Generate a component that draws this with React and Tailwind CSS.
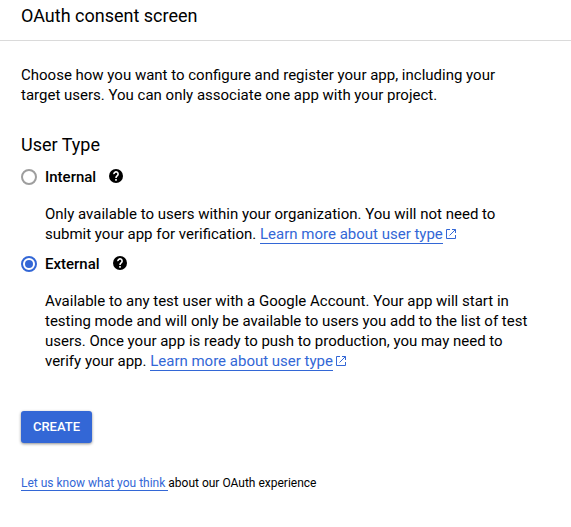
function HelpIcon() {
  return (
    <svg viewBox="0 0 14 14" className="ml-[13px] size-3.5 -translate-y-px" fill="none">
      <circle cx="7" cy="7" r="7" fill="#000" />
      <path
        d="M4.9 5.1a2.1 2.1 0 1 1 3.6 1.4C7.7 7.3 7 7.5 7 9"
        stroke="#fff"
        strokeWidth="1.6"
      />
      <path d="M6.2 10h1.6v1.7H6.2z" fill="#fff" />
    </svg>
  );
}

function Radio({ checked }) {
  return (
    <span
      className={
        "flex size-4 shrink-0 items-center justify-center rounded-full border-2 " +
        (checked ? "border-[#3367d6]" : "border-[#9e9e9e]")
      }
    >
      {checked && <span className="size-2 rounded-full bg-[#3367d6]" />}
    </span>
  );
}

function Option({ label, checked, children }) {
  return (
    <div>
      <div className="flex h-5 items-center">
        <Radio checked={checked} />
        <span className="ml-2 text-[15px] font-medium leading-5">{label}</span>
        <HelpIcon />
      </div>
      <p className="mt-[17px] pl-6">{children}</p>
    </div>
  );
}

function LearnMore() {
  return (
    <a className="text-[#3367d6]">
      <span className="border-b border-[#3367d6]">Learn more about user type</span>
      <svg viewBox="0 0 10 10" className="ml-[3px] inline-block size-2.5 align-baseline" fill="none" stroke="currentColor">
        <path d="M4 .5H.5v9h9V6M6 .5h3.5V4M9.5.5 3.5 6.5" />
      </svg>
    </a>
  );
}

export default function App() {
  return (
    <div className="h-[527px] w-[571px] overflow-hidden bg-white font-[Roboto,sans-serif] text-[15px] leading-5 text-black">
      <header className="h-[41px] border-b border-[#dadada] pl-[21px] pt-1 text-lg leading-6">
        OAuth consent screen
      </header>
      <main className="whitespace-nowrap pl-[21px] pt-6">
        <p>
          Choose how you want to configure and register your app, including your
          <br />
          target users. You can only associate one app with your project.
        </p>
        <h2 className="mt-7 text-lg leading-6">User Type</h2>
        <div className="mt-2.5 flex flex-col gap-2.5">
          <Option label="Internal">
            Only available to users within your organization. You will not need to
            <br />
            submit your app for verification. <LearnMore />
          </Option>
          <Option label="External" checked>
            Available to any test user with a Google Account. Your app will start in
            <br />
            testing mode and will only be available to users you add to the list of test
            <br />
            users. Once your app is ready to push to production, you may need to
            <br />
            verify your app. <LearnMore />
          </Option>
        </div>
        <button className="mt-10 flex h-8 w-[71px] items-center justify-center rounded-[3px] bg-[#3367d6] text-[13px] font-medium text-white shadow-[0_1px_3px_rgba(0,0,0,0.45)]">
          CREATE
        </button>
        <p className="mt-8 text-xs leading-4">
          <a className="whitespace-pre border-b border-[#3367d6] text-[#3367d6]">{"Let us know what you think "}</a>
          about our OAuth experience
        </p>
      </main>
    </div>
  );
}
